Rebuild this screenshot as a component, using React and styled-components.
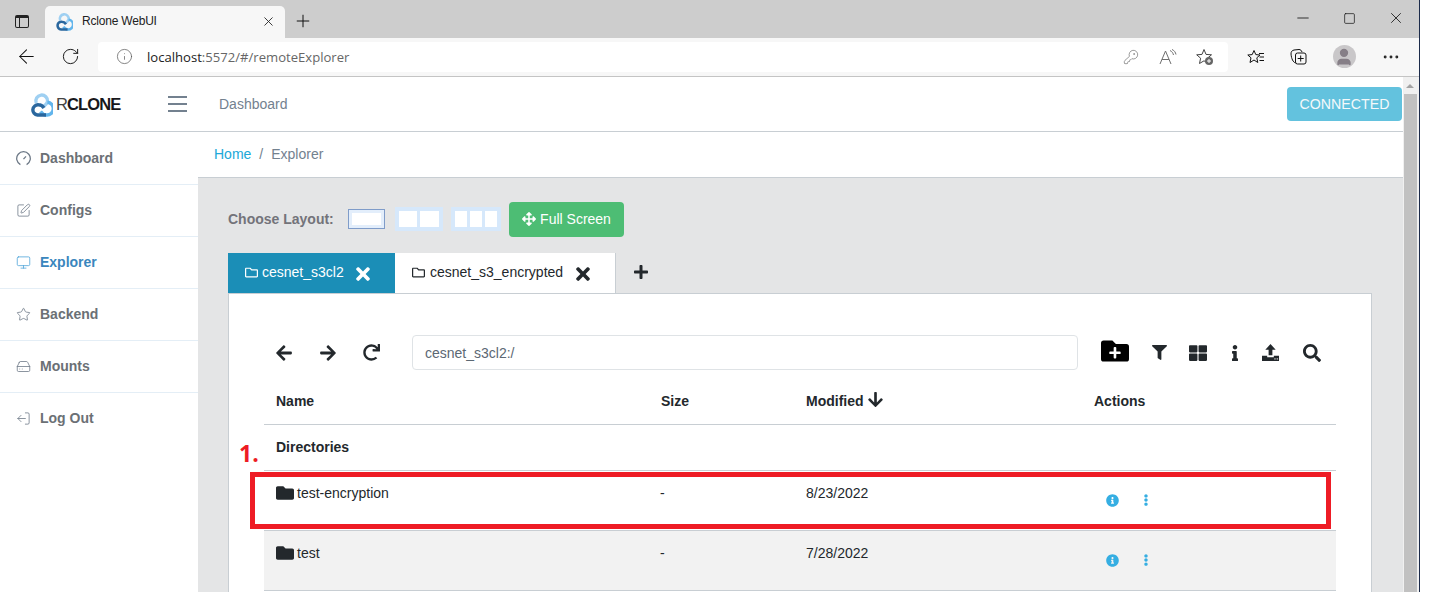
import styled, { createGlobalStyle } from 'styled-components';
import {
  FaArrowLeft, FaArrowRight, FaRedo, FaFolderPlus, FaFilter, FaThLarge, FaInfo, FaSearch,
  FaFolder, FaRegFolder, FaInfoCircle, FaEllipsisV, FaTimes, FaPlus, FaArrowsAlt, FaArrowDown,
} from 'react-icons/fa';
import {
  ArrowLeft, RotateCw, Info, KeyRound, Plus, X, Minus, Square, SquarePen, Monitor, Star, HardDrive, LogOut,
  User, Ellipsis,
} from 'lucide-react';

const GlobalStyle = createGlobalStyle`
  html, body { margin: 0; padding: 0; height: 100%; overflow: hidden; background: #fff; }
  body { font-family: "Liberation Sans", Arial, sans-serif; font-size: 14px; color: #23282c; }
  * { box-sizing: border-box; }
`;

function CloudLogo({ width = 22, height = 25 }) {
  return (
    <svg width={width} height={height} viewBox="0 0 22 25" fill="none" strokeWidth="3.4">
      <path d="M5.2 11 A5.9 5.9 0 1 1 16.6 9.5 C16 11.2 14.8 12.8 13 14.2" stroke="#9fd0f2" />
      <path d="M16.4 10.3 A6 6 0 0 1 15.5 23 C12.5 23 10.5 21 9.5 19.5" stroke="#62b5ec" />
      <path d="M13 16 C12 14.5 10 12.8 7.5 12.8 A5.1 5.1 0 0 0 6.5 23 H15" stroke="#2a679e" />
    </svg>
  );
}

function DashGauge({ size, strokeWidth }) {
  return (
    <svg width={size} height={size} viewBox="0 0 15 15" fill="none" stroke="currentColor" strokeWidth={strokeWidth}>
      <path d="M4.4 13.6 A6.8 6.8 0 1 1 10.6 13.6" />
      <path d="M7.5 8.2 L10 5.4" />
    </svg>
  );
}

function ReadAloud() {
  return (
    <svg width="18" height="16" viewBox="0 0 18 16" fill="none" stroke="#6e6e6e" strokeWidth="1">
      <path d="M1 15 L6.5 2 L12 15 M3 10.5 H10" />
      <path d="M11 1.5 C13 2.5 14 4 14.5 6 M13 0.5 C15.5 1.5 16.5 3.5 17 5.5" />
    </svg>
  );
}

function StarPlus() {
  return (
    <svg width="18" height="18" viewBox="0 0 18 18" fill="none">
      <path d="M8 1.5 L10 6.4 L15.5 6.8 L11.4 10.2 L12.5 15.5 L8 12.8 L3.5 15.5 L4.6 10.2 L.7 6.8 L6 6.4 Z" stroke="#444" strokeWidth="1" />
      <circle cx="13" cy="13" r="4" fill="#666" />
      <path d="M13 11 V15 M11 13 H15" stroke="#fff" strokeWidth="1" />
    </svg>
  );
}

function StarList() {
  return (
    <svg width="18" height="16" viewBox="0 0 18 16" fill="none" stroke="#111" strokeWidth="1">
      <path d="M7 1.5 L8.8 5.6 L13 6 L9.8 8.8 L10.8 13.5 L7 11 L3 13.5 L4 8.8 L.8 6 L5.2 5.6 Z" />
      <path d="M12 4.5 H17 M12.5 8 H17 M12.5 11.5 H17" />
    </svg>
  );
}

function Collections() {
  return (
    <svg width="17" height="17" viewBox="0 0 17 17" fill="none" stroke="#111" strokeWidth="1">
      <path d="M5.5 15 C3 14 1.5 11 1 6 C1 3.5 2 2.5 4 2 L9 1.5 C10.5 1.5 11.5 2.5 12 4" />
      <rect x="5.5" y="5" width="10.5" height="11" rx="2" />
      <path d="M10.7 7.5 V13.5 M7.7 10.5 H13.7" />
    </svg>
  );
}

function UploadDrive() {
  return (
    <svg width="17" height="17" viewBox="0 0 18 18">
      <path d="M9 0 L14.5 6 H11 V12 H7 V6 H3.5 Z" fill="#23282c" />
      <path d="M0 12.5 H5.5 V14 H12.5 V12.5 H18 V18 H0 Z" fill="#23282c" />
      <path d="M13 15.8 h1.5 M15.5 15.8 h1.5" stroke="#fff" strokeWidth="1" />
    </svg>
  );
}

const LogOutLeft = styled(LogOut)`
  transform: scaleX(-1);
`;

const navItems = [
  { label: 'Dashboard', Icon: DashGauge },
  { label: 'Configs', Icon: SquarePen },
  { label: 'Explorer', Icon: Monitor, active: true },
  { label: 'Backend', Icon: Star },
  { label: 'Mounts', Icon: HardDrive },
  { label: 'Log Out', Icon: LogOutLeft },
];

const layouts = [
  { cells: [29], selected: true },
  { cells: [18, 19] },
  { cells: [12, 12, 12] },
];

const rows = [
  { name: 'test-encryption', size: '-', modified: '8/23/2022' },
  { name: 'test', size: '-', modified: '7/28/2022', shaded: true },
];

export default function App() {
  return (
    <Window>
      <GlobalStyle />
      <TabStrip>
        <WindowMenuIcon />
        <BrowserTab>
          <CloudLogo width={17} height={19} />
          <TabTitle>Rclone WebUI</TabTitle>
          <X size={15} strokeWidth={1.4} color="#222" />
        </BrowserTab>
        <NewTab><Plus size={20} strokeWidth={1.2} color="#111" /></NewTab>
        <WindowControls>
          <Minus size={18} strokeWidth={1.1} color="#111" />
          <Square size={13} strokeWidth={1.3} color="#111" />
          <X size={18} strokeWidth={1.1} color="#111" />
        </WindowControls>
      </TabStrip>
      <AddressRow>
        <ChromeButton><ArrowLeft size={23} strokeWidth={1.1} color="#111" /></ChromeButton>
        <ChromeButton><RotateCw size={19} strokeWidth={1.2} color="#111" /></ChromeButton>
        <AddressBar>
          <Info size={17} strokeWidth={1} color="#555" />
          <AddressText><b>localhost</b>:5572/#/remoteExplorer</AddressText>
          <AddressIcons>
            <KeyRound size={16} strokeWidth={1.1} color="#777" />
            <ReadAloud />
            <StarPlus />
          </AddressIcons>
        </AddressBar>
        <BrowserActions>
          <StarList />
          <Collections />
          <Avatar><User size={20} fill="#867f87" color="#867f87" /></Avatar>
          <Ellipsis size={20} strokeWidth={1.5} color="#222" />
        </BrowserActions>
      </AddressRow>
      <Viewport>
        <AppColumn>
          <AppHeader>
            <Brand>
              <CloudLogo />
              <BrandText><span>R</span>CLONE</BrandText>
            </Brand>
            <Hamburger><i /><i /><i /></Hamburger>
            <HeaderLink>Dashboard</HeaderLink>
            <ConnectedButton>CONNECTED</ConnectedButton>
          </AppHeader>
          <AppBody>
            <Sidebar>
              {navItems.map(({ label, Icon, active }) => (
                <NavItem key={label} $active={active}>
                  <Icon size={15} strokeWidth={1.25} />
                  {label}
                </NavItem>
              ))}
            </Sidebar>
            <Main>
              <Breadcrumb>
                <a>Home</a>
                <BreadcrumbSep>/</BreadcrumbSep>
                <span>Explorer</span>
              </Breadcrumb>
              <Content>
                <LayoutRow>
                  <LayoutLabel>Choose Layout:</LayoutLabel>
                  {layouts.map((layout) => (
                    <LayoutPicker key={layout.cells.length} $selected={layout.selected}>
                      {layout.cells.map((w, i) => <LayoutCell key={i} $w={w} />)}
                    </LayoutPicker>
                  ))}
                  <FullScreenButton><FaArrowsAlt size={14} /> Full Screen</FullScreenButton>
                </LayoutRow>
                <TabsRow>
                  <RemoteTab $active>
                    <FaRegFolder size={13} />
                    cesnet_s3cl2
                    <CloseMark><FaTimes size={20} /></CloseMark>
                  </RemoteTab>
                  <RemoteTab>
                    <FaRegFolder size={13} />
                    cesnet_s3_encrypted
                    <CloseMark><FaTimes size={20} /></CloseMark>
                  </RemoteTab>
                  <AddTab><FaPlus size={16} /></AddTab>
                </TabsRow>
                <Card>
                  <PathRow>
                    <NavIcons>
                      <FaArrowLeft size={18} />
                      <FaArrowRight size={18} />
                      <FaRedo size={17} />
                    </NavIcons>
                    <PathInput>cesnet_s3cl2:/</PathInput>
                    <ToolIcons>
                      <NewFolderIcon size={28} />
                      <FaFilter size={15} />
                      <FaThLarge size={18} />
                      <InfoIcon size={16} />
                      <UploadDrive />
                      <SearchIcon size={18} />
                    </ToolIcons>
                  </PathRow>
                  <HeadRow>
                    <span>Name</span>
                    <span>Size</span>
                    <span>Modified <FaArrowDown size={17} /></span>
                    <span>Actions</span>
                  </HeadRow>
                  <SectionRow>Directories</SectionRow>
                  {rows.map((row) => (
                    <FileRow key={row.name} $shaded={row.shaded}>
                      <NameCell><FaFolder size={18} color="#23282c" />{row.name}</NameCell>
                      <DashCell>{row.size}</DashCell>
                      <span>{row.modified}</span>
                      <ActionCell>
                        <FaInfoCircle size={13} />
                        <FaEllipsisV size={12} />
                      </ActionCell>
                    </FileRow>
                  ))}
                </Card>
              </Content>
              <StepNumber>1.</StepNumber>
              <Highlight />
            </Main>
          </AppBody>
        </AppColumn>
        <Scrollbar>
          <ScrollArrow />
          <ScrollThumb />
        </Scrollbar>
      </Viewport>
    </Window>
  );
}

const Window = styled.div`
  width: 1420px;
  height: 592px;
  border-right: 1px solid #1c2b4a;
  display: flex;
  flex-direction: column;
  overflow: hidden;
  background: #fff;
`;

const TabStrip = styled.div`
  height: 38px;
  flex: none;
  background: #cdcdcd;
  display: flex;
  align-items: flex-end;
  padding-left: 45px;
  position: relative;
`;

const WindowMenuIcon = styled.div`
  position: absolute;
  left: 15px;
  top: 15px;
  width: 14px;
  height: 13px;
  border: 1.5px solid #222;
  border-top-width: 3px;
  border-radius: 2px;
  &::after {
    content: '';
    display: block;
    width: 3px;
    height: 100%;
    border-right: 1px solid #222;
  }
`;

const BrowserTab = styled.div`
  width: 240px;
  height: 32px;
  background: #f7f7f7;
  border-radius: 5px 5px 0 0;
  display: flex;
  align-items: center;
  padding: 0 9px 2px 11px;
  font-size: 12px;
  letter-spacing: -0.2px;
  color: #222;
`;

const TabTitle = styled.span`
  flex: 1;
  margin-left: 9px;
`;

const NewTab = styled.div`
  width: 36px;
  height: 32px;
  display: flex;
  align-items: center;
  justify-content: center;
  padding-bottom: 2px;
`;

const WindowControls = styled.div`
  margin-left: auto;
  width: 146px;
  height: 38px;
  display: flex;
  align-items: center;
  justify-content: space-between;
  padding: 0 14px 2px 21px;
`;

const AddressRow = styled.div`
  height: 39px;
  flex: none;
  background: #f7f7f7;
  border-bottom: 1px solid #c4c4c4;
  display: flex;
  align-items: center;
  padding-bottom: 1px;
`;

const ChromeButton = styled.div`
  width: 44px;
  display: flex;
  justify-content: center;
  &:first-child { margin-left: 4px; }
`;

const AddressBar = styled.div`
  width: 1130px;
  height: 30px;
  margin-left: 6px;
  background: #fff;
  border-radius: 4px;
  display: flex;
  align-items: center;
  padding-left: 18px;
`;

const AddressText = styled.span`
  font-family: "Open Sans", sans-serif;
  font-size: 13.1px;
  color: #666;
  margin-left: 14px;
  b { font-weight: 400; color: #222; }
`;

const AddressIcons = styled.div`
  margin-left: auto;
  width: 105px;
  padding-right: 14px;
  display: flex;
  align-items: center;
  justify-content: space-between;
`;

const BrowserActions = styled.div`
  flex: 1;
  display: flex;
  align-items: center;
  justify-content: space-between;
  padding: 0 18px 0 19px;
`;

const Avatar = styled.div`
  width: 23px;
  height: 23px;
  border-radius: 50%;
  background: #c9c7c9;
  display: flex;
  align-items: center;
  justify-content: center;
  overflow: hidden;
`;

const Viewport = styled.div`
  flex: 1;
  min-height: 0;
  display: flex;
`;

const AppColumn = styled.div`
  flex: 1;
  min-width: 0;
  display: flex;
  flex-direction: column;
`;

const AppHeader = styled.header`
  height: 55px;
  flex: none;
  border-bottom: 1px solid #c8ced3;
  display: flex;
  align-items: center;
  background: #fff;
`;

const Brand = styled.div`
  width: 155px;
  padding-left: 31px;
  display: flex;
  align-items: center;
  gap: 3px;
`;

const BrandText = styled.span`
  font-size: 16.5px;
  font-weight: 700;
  letter-spacing: -0.9px;
  color: #17171b;
  span { font-weight: 400; color: #444; }
`;

const Hamburger = styled.div`
  width: 64px;
  padding-left: 13px;
  display: flex;
  flex-direction: column;
  gap: 5px;
  i {
    display: block;
    width: 19px;
    height: 2px;
    background: #73818f;
  }
`;

const HeaderLink = styled.span`
  color: #73818f;
`;

const ConnectedButton = styled.div`
  margin-left: auto;
  margin-right: 1px;
  width: 115px;
  height: 34px;
  border-radius: 4px;
  background: #63c2de;
  color: #f4f9fb;
  font-size: 14.2px;
  display: flex;
  align-items: center;
  justify-content: center;
`;

const AppBody = styled.div`
  flex: 1;
  min-height: 0;
  display: flex;
`;

const Sidebar = styled.nav`
  width: 198px;
  flex: none;
  background: #fff;
`;

const NavItem = styled.div`
  height: 52px;
  padding-left: 16px;
  display: flex;
  align-items: center;
  gap: 9px;
  font-weight: 700;
  color: ${(p) => (p.$active ? '#3a86bd' : '#6b7075')};
  svg { color: ${(p) => (p.$active ? '#4ba3d8' : '#6b7785')}; }
  & + & {
    border-top: 1px solid #e4eef6;
    padding-bottom: 1px;
  }
`;

const Main = styled.main`
  flex: 1;
  min-width: 0;
  background: #e4e5e6;
  position: relative;
`;

const Breadcrumb = styled.div`
  height: 46px;
  background: #fff;
  border-bottom: 1px solid #c8ced3;
  padding: 0 0 1px 16px;
  display: flex;
  align-items: center;
  color: #73818f;
  a { color: #20a8d8; }
`;

const BreadcrumbSep = styled.span`
  margin: 0 8px;
`;

const Content = styled.div`
  padding: 23px 31px 0 30px;
`;

const LayoutRow = styled.div`
  height: 36px;
  display: flex;
  align-items: center;
`;

const LayoutLabel = styled.span`
  width: 120px;
  font-weight: 700;
  color: #73737a;
  margin-bottom: 1px;
`;

const LayoutPicker = styled.div`
  height: ${(p) => (p.$selected ? 20 : 24)}px;
  margin-right: ${(p) => (p.$selected ? 10 : 8)}px;
  padding: ${(p) => (p.$selected ? '3px 3px' : '4px')};
  display: flex;
  gap: 3px;
  background: ${(p) => (p.$selected ? '#e3eefb' : '#d6e8fb')};
  border: ${(p) => (p.$selected ? '1px solid #7f9cc9' : '0')};
`;

const LayoutCell = styled.div`
  width: ${(p) => p.$w}px;
  background: #fff;
`;

const FullScreenButton = styled.div`
  width: 115px;
  height: 35px;
  border-radius: 4px;
  background: #4dbd74;
  color: #fff;
  display: flex;
  align-items: center;
  justify-content: center;
  gap: 4px;
`;

const TabsRow = styled.div`
  height: 40px;
  margin-top: 16px;
  display: flex;
`;

const RemoteTab = styled.div`
  padding: 0 0 2px 17px;
  width: ${(p) => (p.$active ? 167 : 221)}px;
  display: flex;
  align-items: center;
  gap: ${(p) => (p.$active ? 4 : 5)}px;
  background: ${(p) => (p.$active ? '#1b8eb7' : '#fff')};
  color: ${(p) => (p.$active ? '#fff' : '#23282c')};
  border-right: ${(p) => (p.$active ? '0' : '1px solid #c8ced3')};
  white-space: nowrap;
`;

const CloseMark = styled.span`
  display: flex;
  margin: 3px 0 0 5px;
  color: inherit;
`;

const AddTab = styled.div`
  margin-left: 17px;
  padding-bottom: 3px;
  display: flex;
  align-items: center;
  color: #23282c;
`;

const Card = styled.section`
  height: 330px;
  background: #fff;
  border: 1px solid #c8ced3;
  padding: 0 35px;
`;

const PathRow = styled.div`
  height: 77px;
  padding: 41px 0 0 11px;
  display: flex;
  align-items: flex-start;
`;

const NavIcons = styled.div`
  width: 137px;
  height: 35px;
  display: flex;
  align-items: center;
  gap: 26px;
  color: #23282c;
`;

const PathInput = styled.div`
  width: 666px;
  height: 35px;
  border: 1px solid #dfe3e6;
  border-radius: 4px;
  padding-left: 12px;
  display: flex;
  align-items: center;
  color: #5c6873;
`;

const ToolIcons = styled.div`
  flex: 1;
  height: 35px;
  margin-left: 23px;
  display: flex;
  align-items: center;
  gap: 22.5px;
  color: #23282c;
`;

const NewFolderIcon = styled(FaFolderPlus)`
  color: #000;
  margin-bottom: 4px;
`;

const InfoIcon = styled(FaInfo)`
  margin: 0 -3px;
`;

const SearchIcon = styled(FaSearch)`
  margin-left: 1px;
`;

const tableColumns = `grid-template-columns: 385px 145px 288px 1fr;`;

const HeadRow = styled.div`
  ${tableColumns}
  display: grid;
  height: 54px;
  padding: 20px 0 0 12px;
  border-bottom: 1px solid #c8ced3;
  font-weight: 700;
  & > span {
    display: flex;
    align-items: flex-start;
    gap: 3px;
    line-height: 20px;
  }
`;

const SectionRow = styled.div`
  height: 46px;
  padding: 0 0 2px 12px;
  border-bottom: 1px solid #c8ced3;
  display: flex;
  align-items: center;
  font-weight: 700;
`;

const FileRow = styled.div`
  ${tableColumns}
  display: grid;
  height: 60px;
  padding: 12px 0 0 12px;
  border-bottom: 1px solid #c8ced3;
  background: ${(p) => (p.$shaded ? '#f2f2f2' : '#fff')};
  line-height: 20px;
`;

const NameCell = styled.span`
  display: flex;
  align-items: flex-start;
  gap: 3px;
  svg { margin-top: 1px; }
`;

const DashCell = styled.span`
  margin-left: -1px;
`;

const ActionCell = styled.span`
  display: flex;
  align-items: center;
  gap: 21px;
  height: 34px;
  padding-left: 12px;
  color: #35aee2;
`;

const StepNumber = styled.div`
  position: absolute;
  left: 41px;
  top: 305px;
  font-family: "Open Sans", sans-serif;
  font-size: 23px;
  font-weight: 700;
  color: #ed1c24;
`;

const Highlight = styled.div`
  position: absolute;
  left: 52px;
  top: 340px;
  width: 1081px;
  height: 57px;
  border: 5px solid #ee1c25;
`;

const Scrollbar = styled.div`
  width: 16px;
  flex: none;
  background: #f0f0f0;
  display: flex;
  flex-direction: column;
  align-items: flex-start;
`;

const ScrollArrow = styled.div`
  margin: 7px 0 0 3px;
  border-left: 4px solid transparent;
  border-right: 4px solid transparent;
  border-bottom: 4px solid #a3a3a3;
`;

const ScrollThumb = styled.div`
  width: 13px;
  flex: 1;
  margin: 6px 0 0 1px;
  background: #c1c1c1;
`;
